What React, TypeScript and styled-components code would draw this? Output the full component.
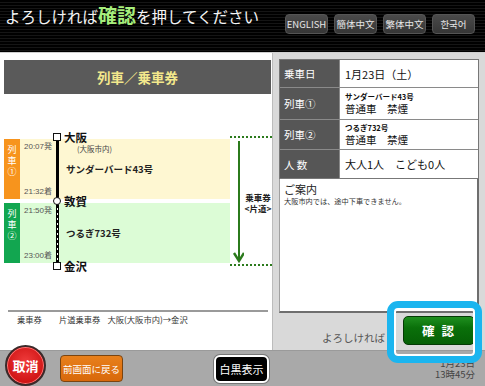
import styled, { createGlobalStyle } from 'styled-components';

const GlobalStyle = createGlobalStyle`
  html, body {
    margin: 0;
    padding: 0;
    background: #fff;
  }
  * {
    box-sizing: border-box;
  }
`;

const LANGS = ['ENGLISH', '簡体中文', '繁体中文', '한국어'];

const App = () => {
  return (
    <>
      <GlobalStyle />
      <Screen>
        <Header>
          <Title>
            よろしければ<Em>確認</Em>を押してください
          </Title>
          <LangGroup>
            {LANGS.map((lang) => (
              <LangButton key={lang}>{lang}</LangButton>
            ))}
          </LangGroup>
        </Header>

        <Main>
          <LeftPanel>
            <TitleBar>列車／乗車券</TitleBar>
            <Diagram>
              <RouteColumn>
                <Segment>
                  <Tag $color="#f7941d">
                    <span>列</span>
                    <span>車</span>
                    <span>①</span>
                  </Tag>
                  <SegBody $color="#fef7d2">
                    <Times>
                      <span>20:07発</span>
                      <span>21:32着</span>
                    </Times>
                    <SegContent>
                      <Note>(大阪市内)</Note>
                      <TrainName>サンダーバード43号</TrainName>
                    </SegContent>
                  </SegBody>
                </Segment>
                <Segment>
                  <Tag $color="#12a650">
                    <span>列</span>
                    <span>車</span>
                    <span>②</span>
                  </Tag>
                  <SegBody $color="#dcfcd6">
                    <Times>
                      <span>21:50発</span>
                      <span>23:00着</span>
                    </Times>
                    <SegContent>
                      <Note />
                      <TrainName>つるぎ732号</TrainName>
                    </SegContent>
                  </SegBody>
                </Segment>

                <RouteLine $top={12} $height={59} />
                <RouteLine $top={76} $height={58} $dashed />
                <Station $top={5}>
                  <Marker />
                  <StationName>大阪</StationName>
                </Station>
                <Station $top={69}>
                  <Marker $round />
                  <StationName>敦賀</StationName>
                </Station>
                <Station $top={134}>
                  <Marker />
                  <StationName>金沢</StationName>
                </Station>
              </RouteColumn>

              <FareBracket>
                <ArrowCol>
                  <svg width="14" height="125" viewBox="0 0 14 125">
                    <line x1="9" y1="2" x2="9" y2="122" stroke="#2b7a1c" strokeWidth="2" />
                    <polyline
                      points="4,114 9,122 14,114"
                      fill="none"
                      stroke="#2b7a1c"
                      strokeWidth="2.4"
                    />
                  </svg>
                </ArrowCol>
                <FareLabel>
                  <span>乗車券</span>
                  <span>&lt;片道&gt;</span>
                </FareLabel>
              </FareBracket>
            </Diagram>

            <FareRule />
            <FareText>
              <FareCell $gap={17}>乗車券</FareCell>
              <FareCell $gap={7}>片道乗車券</FareCell>
              <FareCell $gap={0}>大阪(大阪市内)→金沢</FareCell>
            </FareText>
          </LeftPanel>

          <RightPanel>
            <InfoTable>
              <Label $h={28}>乗車日</Label>
              <Value $h={28}>
                <Big>1月23日（土）</Big>
              </Value>
              <Label $h={32}>列車①</Label>
              <Value $h={32}>
                <Small>サンダーバード43号</Small>
                <Mid>普通車　禁煙</Mid>
              </Value>
              <Label $h={30}>列車②</Label>
              <Value $h={30}>
                <Small>つるぎ732号</Small>
                <Mid>普通車　禁煙</Mid>
              </Value>
              <Label $h={29} $last>
                人 数
              </Label>
              <Value $h={29} $last>
                <Big>大人1人　こども0人</Big>
              </Value>
            </InfoTable>
            <GuideBox>
              <GuideTitle>ご案内</GuideTitle>
              <GuideText>大阪市内では、途中下車できません。</GuideText>
            </GuideBox>
            <ConfirmRow>
              <Prompt>よろしければ</Prompt>
              <ConfirmButton>確 認</ConfirmButton>
            </ConfirmRow>
          </RightPanel>
        </Main>

        <BottomBar>
          <CancelButton>取消</CancelButton>
          <BackButton>前画面に戻る</BackButton>
          <MonoButton>白黒表示</MonoButton>
          <Clock>
            <span>1月23日</span>
            <span>13時45分</span>
          </Clock>
        </BottomBar>

        <Highlight />
      </Screen>
    </>
  );
};

export default App;

const Screen = styled.div`
  position: relative;
  width: 485px;
  height: 386px;
  overflow: hidden;
  display: flex;
  flex-direction: column;
  font-family: 'Noto Sans CJK JP', 'Noto Sans', sans-serif;
  background: #fff;
`;

const Header = styled.div`
  height: 52px;
  flex-shrink: 0;
  display: flex;
  justify-content: space-between;
  align-items: flex-start;
  padding: 0 10px 0 5px;
  background: repeating-linear-gradient(to bottom, #000 0 2px, #151515 2px 3px);
`;

const Title = styled.div`
  margin-top: 5px;
  font-size: 15.5px;
  line-height: 20px;
  color: #f4f4f4;
  white-space: nowrap;
`;

const Em = styled.span`
  font-size: 19px;
  font-weight: 700;
  color: #a6ee7c;
`;

const LangGroup = styled.div`
  display: flex;
  gap: 6px;
  margin-top: 14px;
`;

const LangButton = styled.div`
  width: 43px;
  height: 20px;
  display: flex;
  align-items: center;
  justify-content: center;
  background: linear-gradient(#4a4a4a, #363636);
  border: 1px solid #555;
  border-radius: 4px;
  color: #e6e6e6;
  font-size: 9.5px;
  white-space: nowrap;
  font-family: 'Noto Sans CJK JP', 'Noto Sans CJK KR', sans-serif;
`;

const Main = styled.div`
  height: 298px;
  flex-shrink: 0;
  display: flex;
  border-top: 1px solid #d0d0d0;
`;

const LeftPanel = styled.div`
  width: 273px;
  flex-shrink: 0;
  background: #fff;
  border-right: 1px solid #bcbcbc;
  display: flex;
  flex-direction: column;
`;

const TitleBar = styled.div`
  margin: 7px 1px 0 4px;
  height: 34px;
  background: #5a5a5a;
  color: #f3e88c;
  font-size: 13.5px;
  font-weight: 700;
  display: flex;
  align-items: center;
  justify-content: center;
`;

const Diagram = styled.div`
  margin-top: 34px;
  display: flex;
  align-items: flex-start;
`;

const RouteColumn = styled.div`
  position: relative;
  width: 226px;
  margin-left: 4px;
  padding: 11px 0 8px;
  display: flex;
  flex-direction: column;
  gap: 4px;
`;

const Segment = styled.div`
  height: 60px;
  display: flex;
`;

const Tag = styled.div<{ $color: string }>`
  width: 16px;
  background: ${(p) => p.$color};
  color: #fff;
  font-size: 9px;
  line-height: 11px;
  display: flex;
  flex-direction: column;
  align-items: center;
  padding-top: 5px;
`;

const SegBody = styled.div<{ $color: string }>`
  flex: 1;
  display: flex;
  background: ${(p) => p.$color};
`;

const Times = styled.div`
  width: 40px;
  padding: 3px 0 3px 4px;
  display: flex;
  flex-direction: column;
  justify-content: space-between;
  font-size: 8px;
  line-height: 9px;
  color: #555;
  font-family: 'Liberation Sans', 'Noto Sans CJK JP', sans-serif;
`;

const SegContent = styled.div`
  flex: 1;
  display: grid;
  grid-template-rows: 1fr auto 1fr;
  padding-left: 6px;
`;

const Note = styled.div`
  padding: 5px 0 0 11px;
  font-size: 7.5px;
  line-height: 9px;
  color: #444;
`;

const TrainName = styled.div`
  font-size: 9.5px;
  line-height: 13px;
  font-weight: 700;
  color: #222;
`;

const RouteLine = styled.div<{ $top: number; $height: number; $dashed?: boolean }>`
  position: absolute;
  left: 52px;
  top: ${(p) => p.$top}px;
  height: ${(p) => p.$height}px;
  width: 3px;
  background: ${(p) =>
    p.$dashed
      ? 'repeating-linear-gradient(to bottom, #000 0 3px, #fff 3px 5px)'
      : '#000'};
  border: ${(p) => (p.$dashed ? '0.5px solid #000' : 'none')};
`;

const Station = styled.div<{ $top: number }>`
  position: absolute;
  left: 49px;
  top: ${(p) => p.$top}px;
  display: flex;
  align-items: center;
  height: 8px;
`;

const Marker = styled.div<{ $round?: boolean }>`
  width: 8px;
  height: 8px;
  background: #fff;
  border: 1.5px solid #111;
  border-radius: ${(p) => (p.$round ? '50%' : '0')};
`;

const StationName = styled.span`
  margin-left: 3px;
  font-size: 11.5px;
  font-weight: 700;
  color: #111;
  line-height: 12px;
`;

const FareBracket = styled.div`
  width: 42px;
  height: 130px;
  margin-top: 8px;
  display: flex;
  border-top: 2px dotted #2b7a1c;
  border-bottom: 2px dotted #2b7a1c;
`;

const ArrowCol = styled.div`
  width: 14px;
  display: flex;
  align-items: center;
`;

const FareLabel = styled.div`
  flex: 1;
  display: flex;
  flex-direction: column;
  align-items: center;
  justify-content: center;
  padding-top: 4px;
  font-size: 8.5px;
  line-height: 11px;
  font-weight: 700;
  color: #222;
  white-space: nowrap;
`;

const FareRule = styled.div`
  margin: 39px 4px 0 8px;
  height: 2px;
  background: #9a9a9a;
`;

const FareText = styled.div`
  display: flex;
  padding: 2px 0 0 17px;
  font-size: 8.3px;
  line-height: 10px;
  color: #333;
`;

const FareCell = styled.span<{ $gap: number }>`
  margin-right: ${(p) => p.$gap}px;
`;

const RightPanel = styled.div`
  flex: 1;
  background: #d9d9d9;
  padding: 6px 6px 0 6px;
  display: flex;
  flex-direction: column;
`;

const InfoTable = styled.div`
  display: grid;
  grid-template-columns: 59px 1fr;
  border: 1px solid #777;
  border-bottom: none;
  background: #fff;
`;

const Label = styled.div<{ $h: number; $last?: boolean }>`
  height: ${(p) => p.$h}px;
  background: #565656;
  color: #fff;
  font-size: 10.5px;
  display: flex;
  align-items: center;
  padding-left: 4px;
  border-bottom: 1px solid ${(p) => (p.$last ? '#777' : '#8a8a8a')};
`;

const Value = styled.div<{ $h: number; $last?: boolean }>`
  height: ${(p) => p.$h}px;
  display: flex;
  flex-direction: column;
  justify-content: center;
  padding-left: 5px;
  border-left: 1px solid #888;
  border-bottom: 1px solid ${(p) => (p.$last ? '#777' : '#8a8a8a')};
  color: #111;
`;

const Big = styled.span`
  font-size: 11px;
  line-height: 14px;
`;

const Small = styled.span`
  font-size: 7.5px;
  line-height: 10px;
  font-weight: 700;
`;

const Mid = styled.span`
  font-size: 10.5px;
  line-height: 13px;
`;

const GuideBox = styled.div`
  height: 134px;
  background: #fff;
  border: 1px solid #a0a0a0;
  border-right: 2px solid #6e6e6e;
  border-bottom: 2px solid #6e6e6e;
  border-top: none;
  padding: 3px 4px;
`;

const GuideTitle = styled.div`
  font-size: 11px;
  line-height: 14px;
  color: #222;
`;

const GuideText = styled.div`
  font-size: 7.2px;
  line-height: 10px;
  color: #333;
`;

const ConfirmRow = styled.div`
  display: flex;
  justify-content: flex-end;
  align-items: center;
  gap: 18px;
  padding-top: 3px;
  margin-right: 4px;
`;

const Prompt = styled.span`
  font-size: 10.5px;
  color: #555;
  margin-top: 13px;
`;

const ConfirmButton = styled.div`
  width: 72px;
  height: 29px;
  display: flex;
  align-items: center;
  justify-content: center;
  background: linear-gradient(#1f8f1f, #0a700a 40%, #066006);
  border: 1px solid #053a05;
  border-radius: 5px;
  color: #fff;
  font-size: 12.5px;
  font-weight: 700;
  letter-spacing: 2px;
`;

const BottomBar = styled.div`
  flex: 1;
  display: flex;
  align-items: center;
  padding: 0 10px 0 5px;
  background: #a9a9a9;
  border-top: 1px solid #9a9a9a;
`;

const CancelButton = styled.div`
  width: 41px;
  height: 41px;
  margin-top: -6px;
  border-radius: 50%;
  background: radial-gradient(circle at 50% 40%, #f03c3c, #d01414 70%, #b00c0c);
  border: 2px solid #3a2a2a;
  box-shadow: inset 0 0 0 1px #f77;
  color: #fff;
  font-size: 13px;
  font-weight: 700;
  display: flex;
  align-items: center;
  justify-content: center;
`;

const BackButton = styled.div`
  margin-left: 14px;
  width: 63px;
  height: 27px;
  display: flex;
  align-items: center;
  justify-content: center;
  background: linear-gradient(#e8801c, #d8680a);
  border: 1px solid #7a4410;
  border-radius: 4px;
  color: #fff;
  font-size: 9.5px;
  white-space: nowrap;
`;

const MonoButton = styled.div`
  margin-left: 91px;
  width: 55px;
  height: 28px;
  display: flex;
  align-items: center;
  justify-content: center;
  background: #000;
  border: 2px solid #fff;
  box-shadow: 0 0 0 1px #777;
  border-radius: 6px;
  color: #fff;
  font-size: 11px;
`;

const Clock = styled.div`
  margin-left: auto;
  display: flex;
  flex-direction: column;
  align-items: flex-end;
  font-size: 9.5px;
  line-height: 11px;
  color: #444;
`;

const Highlight = styled.div`
  position: absolute;
  left: 387px;
  top: 301px;
  width: 95px;
  height: 62px;
  border: 7px solid #1bb5ef;
  border-radius: 11px;
  box-shadow: inset 0 0 0 2px #fff;
  pointer-events: none;
`;
